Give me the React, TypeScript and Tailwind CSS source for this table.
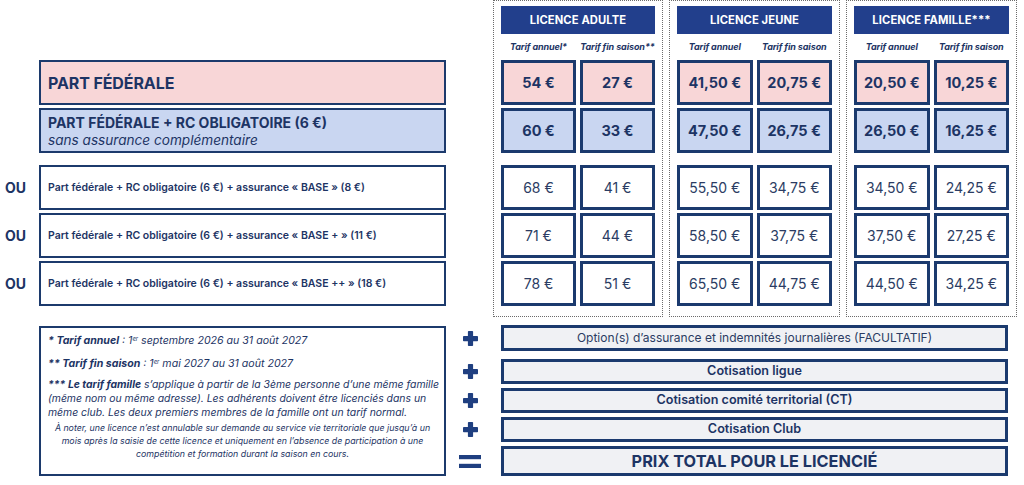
import React from "react";

const NAVY = "text-[#1d3464]";

type Panel = {
  title: string;
  labels: [string, string];
  w: string;
  prices: [string, string][];
};

const panels: Panel[] = [
  {
    title: "LICENCE ADULTE",
    labels: ["Tarif annuel*", "Tarif fin saison**"],
    w: "w-[170px]",
    prices: [
      ["54 €", "27 €"],
      ["60 €", "33 €"],
      ["68 €", "41 €"],
      ["71 €", "44 €"],
      ["78 €", "51 €"],
    ],
  },
  {
    title: "LICENCE JEUNE",
    labels: ["Tarif annuel", "Tarif fin saison"],
    w: "w-[171px]",
    prices: [
      ["41,50 €", "20,75 €"],
      ["47,50 €", "26,75 €"],
      ["55,50 €", "34,75 €"],
      ["58,50 €", "37,75 €"],
      ["65,50 €", "44,75 €"],
    ],
  },
  {
    title: "LICENCE FAMILLE***",
    labels: ["Tarif annuel", "Tarif fin saison"],
    w: "w-[171px]",
    prices: [
      ["20,50 €", "10,25 €"],
      ["26,50 €", "16,25 €"],
      ["34,50 €", "24,25 €"],
      ["37,50 €", "27,25 €"],
      ["44,50 €", "34,25 €"],
    ],
  },
];

const rowBg = ["bg-[#f8d6d7]", "bg-[#c9d6f1]", "bg-white", "bg-white", "bg-white"];
const rowMt = ["", "mt-[3px]", "mt-[12px]", "mt-[3px]", "mt-[3px]"];

function Plus() {
  return (
    <svg width="15" height="15" viewBox="0 0 15 15">
      <rect x="0" y="5" width="15" height="5.2" rx="0.8" fill="#1f3f80" />
      <rect x="4.9" y="0" width="5.2" height="15" rx="0.8" fill="#1f3f80" />
    </svg>
  );
}

function Equals() {
  return (
    <svg width="22" height="13" viewBox="0 0 22 13">
      <rect x="0" y="0" width="22" height="4.2" fill="#1f3f80" />
      <rect x="0" y="8.8" width="22" height="4.2" fill="#1f3f80" />
    </svg>
  );
}

function LeftBoxes() {
  const ouRows = [
    "Part fédérale + RC obligatoire (6 €) + assurance « BASE » (8 €)",
    "Part fédérale + RC obligatoire (6 €) + assurance « BASE + » (11 €)",
    "Part fédérale + RC obligatoire (6 €) + assurance « BASE ++ » (18 €)",
  ];
  return (
    <div className="w-[493px] pt-[60px] flex flex-col">
      <div className="flex h-[45px]">
        <div className="w-[39px]" />
        <div className="w-[407px] border-2 border-[#1c3a6c] bg-[#f8d6d7] flex items-center pl-[7px]">
          <span className="text-[16px] font-bold tracking-[-0.1px]">PART FÉDÉRALE</span>
        </div>
      </div>
      <div className="flex h-[45px] mt-[3px]">
        <div className="w-[39px]" />
        <div className="w-[407px] border-2 border-[#1c3a6c] bg-[#c9d6f1] flex flex-col justify-center pl-[7px]">
          <span className="text-[14px] font-bold leading-[19px]">PART FÉDÉRALE + RC OBLIGATOIRE (6 €)</span>
          <span className="text-[13.6px] italic leading-[17px]">sans assurance complémentaire</span>
        </div>
      </div>
      {ouRows.map((t, i) => (
        <div key={i} className={`flex h-[45px] ${i === 0 ? "mt-[12px]" : "mt-[3px]"}`}>
          <div className="w-[39px] flex items-center pl-[5px] text-[14px] font-bold">OU</div>
          <div className="w-[407px] border-2 border-[#1c3a6c] bg-white flex items-center pl-[7px]">
            <span className="text-[10.5px] font-semibold">{t}</span>
          </div>
        </div>
      ))}
    </div>
  );
}

function PanelView({ p }: { p: Panel }) {
  return (
    <div className={`${p.w} h-[317px] border border-dotted border-[#6b6b6b] px-[7px] pt-[5px] flex flex-col`}>
      <div className="h-[28px] bg-[#223f8c] flex items-center justify-center text-white text-[11.2px] font-bold tracking-[0.1px]">
        {p.title}
      </div>
      <div className="h-[26px] grid grid-cols-2 gap-x-[4px] items-center">
        {p.labels.map((l) => (
          <div key={l} className="text-center text-[9px] font-bold italic tracking-[-0.1px] whitespace-nowrap">
            {l}
          </div>
        ))}
      </div>
      {p.prices.map((pr, i) => (
        <div key={i} className={`grid grid-cols-2 gap-x-[4px] h-[45px] ${rowMt[i]}`}>
          {pr.map((v, j) => (
            <div
              key={j}
              className={`${rowBg[i]} border-[3px] border-[#1b3a6e] flex items-center justify-center ${
                i < 2 ? "text-[14.5px] font-bold" : "text-[14px] font-normal text-[#2b3c63]"
              }`}
            >
              {v}
            </div>
          ))}
        </div>
      ))}
    </div>
  );
}

function Notes() {
  return (
    <div className="flex">
      <div className="w-[39px]" />
      <div className="w-[407px] h-[150px] mt-[1px] border-2 border-[#1c3a6c] bg-white pl-[7px] pr-[2px] pt-[6px] italic whitespace-nowrap">
        <p className="text-[10.6px] leading-[14px]">
          <span className="font-bold">* Tarif annuel</span> : 1<sup className="text-[6px]">er</sup> septembre 2026 au 31 août 2027
        </p>
        <p className="text-[10.6px] leading-[14px] mt-[9px]">
          <span className="font-bold">** Tarif fin saison</span> : 1<sup className="text-[6px]">er</sup> mai 2027 au 31 août 2027
        </p>
        <p className="text-[10.4px] leading-[14px] mt-[7px]">
          <span className="font-bold">*** Le tarif famille</span> s’applique à partir de la 3ème personne d’une même famille
          <br />
          (même nom ou même adresse). Les adhérents doivent être licenciés dans un
          <br />
          même club. Les deux premiers membres de la famille ont un tarif normal.
        </p>
        <p className="text-[8.8px] leading-[13px] text-center pr-[5px] mt-[1px]">
          À noter, une licence n’est annulable sur demande au service vie territoriale que jusqu’à un
          <br />
          mois après la saisie de cette licence et uniquement en l’absence de participation à une
          <br />
          compétition et formation durant la saison en cours.
        </p>
      </div>
    </div>
  );
}

function SumRows() {
  const rows: { t: string; h: string; mt: string; cls: string; eq?: boolean }[] = [
    { t: "Option(s) d’assurance et indemnités journalières (FACULTATIF)", h: "h-[26px]", mt: "", cls: "text-[12px] font-normal text-[#2b3c63]" },
    { t: "Cotisation ligue", h: "h-[25px]", mt: "mt-[8px]", cls: "text-[12.6px] font-semibold" },
    { t: "Cotisation comité territorial (CT)", h: "h-[25px]", mt: "mt-[4px]", cls: "text-[12.6px] font-semibold" },
    { t: "Cotisation Club", h: "h-[25px]", mt: "mt-[4px]", cls: "text-[12.6px] font-semibold" },
    { t: "PRIX TOTAL POUR LE LICENCIÉ", h: "h-[30px]", mt: "mt-[4px]", cls: "text-[16.3px] font-bold", eq: true },
  ];
  return (
    <div className="flex flex-col">
      {rows.map((r, i) => (
        <div key={i} className={`flex ${r.h} ${r.mt}`}>
          <div className="w-[55px] flex items-center">
            <div className="ml-[12px] w-[24px] flex justify-center">{r.eq ? <Equals /> : <Plus />}</div>
          </div>
          <div className={`w-[507px] border-[3px] border-[#1b3a6e] bg-[#f0f1f4] flex items-center justify-center ${r.cls}`}>
            {r.t}
          </div>
        </div>
      ))}
    </div>
  );
}

export default function App() {
  return (
    <div
      className={`w-[1024px] h-[485px] bg-white overflow-hidden ${NAVY}`}
      style={{ fontFamily: "Inter, 'Noto Sans', 'Liberation Sans', sans-serif" }}
    >
      <div className="flex h-[317px]">
        <LeftBoxes />
        <div className="flex gap-[6px]">
          {panels.map((p) => (
            <PanelView key={p.title} p={p} />
          ))}
        </div>
      </div>
      <div className="flex pt-[8px]">
        <Notes />
        <SumRows />
      </div>
    </div>
  );
}
